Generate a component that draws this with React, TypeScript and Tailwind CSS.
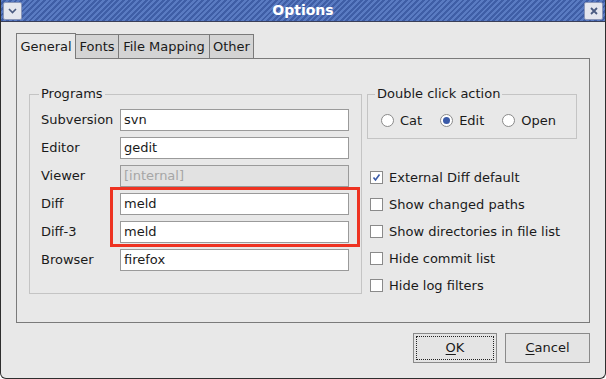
import React from "react";

const PROGRAMS = [
  { label: "Subversion", value: "svn" },
  { label: "Editor", value: "gedit" },
  { label: "Viewer", value: "[internal]", disabled: true },
  { label: "Diff", value: "meld" },
  { label: "Diff-3", value: "meld" },
  { label: "Browser", value: "firefox" },
];

const OPTIONS = [
  { label: "External Diff default", checked: true },
  { label: "Show changed paths" },
  { label: "Show directories in file list" },
  { label: "Hide commit list" },
  { label: "Hide log filters" },
];

const TABS = [
  { label: "General", w: "w-[60px]", active: true },
  { label: "Fonts", w: "w-[44px]" },
  { label: "File Mapping", w: "w-[92px]" },
  { label: "Other", w: "w-[45px]" },
];

function Radio({ label, checked }: { label: string; checked?: boolean }) {
  return (
    <div className="flex items-center gap-[6px]">
      <span className="flex h-[13px] w-[13px] items-center justify-center rounded-full border border-[#8a8a8a] bg-white">
        {checked && <span className="h-[7px] w-[7px] rounded-full bg-[#3a5aa8]" />}
      </span>
      <span>{label}</span>
    </div>
  );
}

function Check({ label, checked }: { label: string; checked?: boolean }) {
  return (
    <div className="flex h-[27px] items-center gap-[6px]">
      <span className="flex h-[13px] w-[13px] items-center justify-center border border-[#8a8a8a] bg-white">
        {checked && (
          <svg width="9" height="9" viewBox="0 0 9 9">
            <path d="M1.5 4.5 L3.5 7 L7.5 1.5" fill="none" stroke="#3a5aa8" strokeWidth="1.6" />
          </svg>
        )}
      </span>
      <span>{label}</span>
    </div>
  );
}

export default function App() {
  return (
    <div className="relative flex h-[379px] w-[606px] flex-col overflow-hidden rounded-b-[6px] border border-t-0 border-[#2e2e2e] bg-[#e8e8e8] font-['DejaVu_Sans',sans-serif] text-[13px] text-[#1a1a1a]">
      {/* title bar */}
      <div className="flex h-[22px] items-center justify-between border-b border-[#3a3f58] bg-[repeating-linear-gradient(135deg,#5a7bc2_0px,#5a7bc2_2px,#3f5ea6_2px,#3f5ea6_4px)] px-[2px]">
        <div className="flex h-[18px] w-[19px] items-center justify-center rounded-[2px] border border-[#8a96b8] bg-[#e4e6ee]">
          <svg width="9" height="6" viewBox="0 0 9 6">
            <path d="M1 1 L4.5 4.5 L8 1" fill="none" stroke="#4a5a80" strokeWidth="1.6" />
          </svg>
        </div>
        <span className="text-[14px] font-bold text-white">Options</span>
        <div className="flex h-[18px] w-[19px] items-center justify-center rounded-[2px] border border-[#8a96b8] bg-[#e4e6ee]">
          <svg width="8" height="8" viewBox="0 0 8 8">
            <path d="M1 1 L7 7 M7 1 L1 7" fill="none" stroke="#4a5a80" strokeWidth="1.8" />
          </svg>
        </div>
      </div>

      {/* notebook */}
      <div className="flex flex-col pl-[15px] pr-[15px] pt-[11px]">
        <div className="flex h-[25px] items-end">
          {TABS.map((t) =>
            t.active ? (
              <div
                key={t.label}
                className={`${t.w} relative z-10 -mb-px flex h-[26px] items-center justify-center border border-b-0 border-[#7a7a7a] bg-[#e8e8e8]`}
              >
                {t.label}
              </div>
            ) : (
              <div
                key={t.label}
                className={`${t.w} -ml-px flex h-[24px] items-center justify-center border border-b-0 border-[#7a7a7a] bg-[#d4d4d4]`}
              >
                {t.label}
              </div>
            )
          )}
        </div>
        <div className="flex h-[265px] gap-[5px] border border-[#7a7a7a] px-[12px] pt-[28px]">
          <fieldset className="h-[207px] w-[334px] border border-[#c4c4c4] px-[11px] pt-[8px]">
            <legend className="ml-[-2px] px-[2px] leading-[14px]">Programs</legend>
            <div className="flex flex-col gap-[6px]">
              {PROGRAMS.map((p) => (
                <div key={p.label} className="flex items-center">
                  <span className="w-[79px]">{p.label}</span>
                  <div
                    className={`flex h-[22px] w-[229px] items-center border border-[#9a9a9a] px-[3px] ${
                      p.disabled ? "bg-[#e2e2e2] text-[#a6a6a6]" : "bg-white"
                    }`}
                  >
                    {p.value}
                  </div>
                </div>
              ))}
            </div>
          </fieldset>
          <div className="flex flex-col">
            <fieldset className="h-[52px] w-[210px] border border-[#c4c4c4] px-[13px] pt-[10px]">
              <legend className="ml-[-6px] px-[2px] leading-[14px]">Double click action</legend>
              <div className="flex gap-[18px]">
                <Radio label="Cat" />
                <Radio label="Edit" checked />
                <Radio label="Open" />
              </div>
            </fieldset>
            <div className="mt-[25px] flex flex-col pl-[3px]">
              {OPTIONS.map((o) => (
                <Check key={o.label} label={o.label} checked={o.checked} />
              ))}
            </div>
          </div>
        </div>
      </div>

      {/* buttons */}
      <div className="flex justify-end gap-[8px] pr-[15px] pt-[10px]">
        <button className="flex h-[30px] w-[84px] items-center justify-center border border-[#8a8a8a] bg-[#e4e4e4] p-[2px]">
          <span className="flex h-full w-full items-center justify-center border border-dotted border-[#222]">
            <span className="underline underline-offset-2">O</span>K
          </span>
        </button>
        <button className="flex h-[30px] w-[85px] items-center justify-center border border-[#8a8a8a] bg-[#e4e4e4]">
          <span>
            <span className="underline underline-offset-2">C</span>ancel
          </span>
        </button>
      </div>

      {/* red annotation */}
      <div className="absolute left-[109px] top-[187px] h-[60px] w-[250px] border-[3px] border-[#ee3322]" />
    </div>
  );
}
